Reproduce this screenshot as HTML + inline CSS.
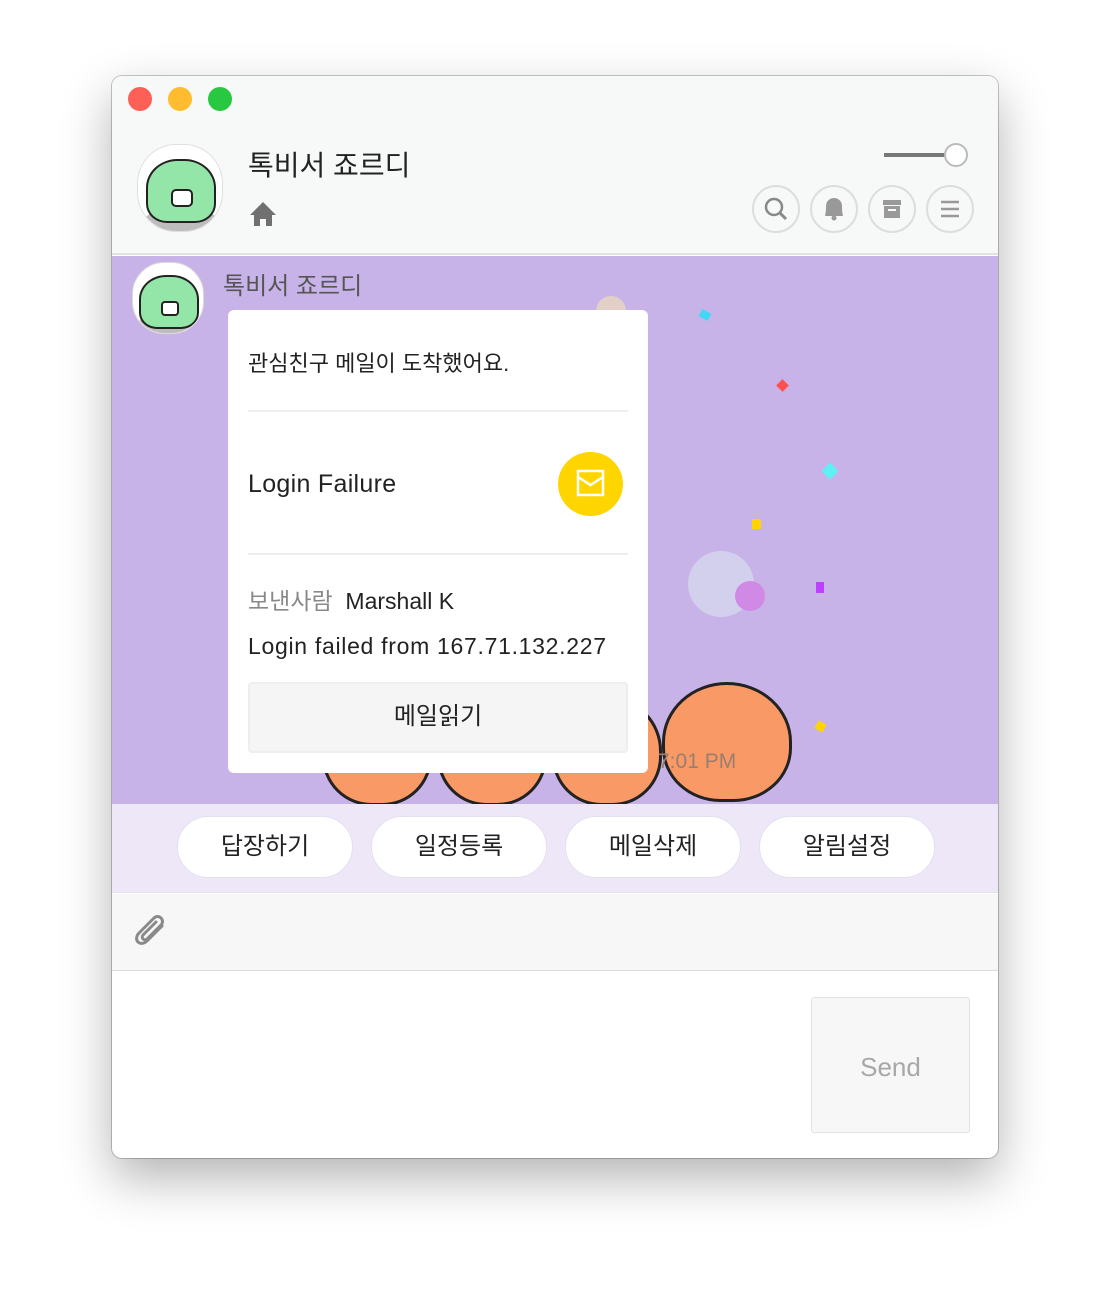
<!DOCTYPE html>
<html><head><meta charset="utf-8"><style>
*{box-sizing:border-box;margin:0;padding:0}
body{width:1110px;height:1306px;background:#fff;font-family:"Liberation Sans","Noto Sans CJK KR",sans-serif;position:relative;overflow:hidden}
.win{position:absolute;left:112px;top:76px;width:886px;height:1082px;border-radius:10px;overflow:hidden;box-shadow:0 20px 50px rgba(0,0,0,.3),0 0 0 1px #c8c8c8;background:#fff}
.abs{position:absolute}
.dot{position:absolute;top:11px;width:24px;height:24px;border-radius:50%}
.cb{position:absolute;top:109px;width:48px;height:48px;border-radius:50%;border:2px solid #ddd;background:#f7f8f8}
.pill{position:absolute;top:740px;width:176px;height:62px;border-radius:31px;background:#fff;border:1px solid #e4e0ec;font-size:24px;color:#222;text-align:center;line-height:60px}
.blob{position:absolute;border-radius:50% 50% 45% 45%;background:#f99a66;border:3px solid #222}
</style></head><body>
<div class="win">
 <div class="abs" style="left:0;top:0;width:886px;height:179px;background:#f7f8f8;border-bottom:2px solid #e2e2e2"></div>
 <div class="dot" style="left:16px;background:#fe5f57"></div>
 <div class="dot" style="left:56px;background:#febc2e"></div>
 <div class="dot" style="left:96px;background:#28c840"></div>
 <div class="abs" style="left:25px;top:68px;width:86px;height:88px;border-radius:45%;background:#fff;border:1px solid #e0e0e0;overflow:hidden">
  <div class="abs" style="left:6px;top:62px;width:74px;height:30px;background:#bdbdbd;border-radius:50%"></div>
  <div class="abs" style="left:8px;top:14px;width:70px;height:64px;background:#94e6a8;border:2px solid #222;border-radius:45% 45% 30% 30%"></div>
  <div class="abs" style="left:33px;top:44px;width:22px;height:18px;background:#fff;border:2px solid #222;border-radius:5px"></div>
 </div>
 <div class="abs" style="left:136px;top:68px;font-size:28px;color:#222">톡비서 죠르디</div>
 <svg class="abs" style="left:137px;top:124px" width="28" height="28" viewBox="0 0 28 28"><path d="M14 2 L27 15 L23 15 L23 26 L17 26 L17 19 L11 19 L11 26 L5 26 L5 15 L1 15 Z" fill="#707070"/></svg>
 <div class="abs" style="left:772px;top:77px;width:64px;height:4px;background:#777"></div>
 <div class="abs" style="left:832px;top:67px;width:24px;height:24px;border-radius:50%;background:#fff;border:2px solid #bbb"></div>
 <div class="cb" style="left:640px"><svg width="44" height="44" viewBox="0 0 44 44"><circle cx="20" cy="20" r="8" fill="none" stroke="#888" stroke-width="2.5"/><path d="M26 26 L32 32" stroke="#888" stroke-width="3"/></svg></div>
 <div class="cb" style="left:698px"><svg width="44" height="44" viewBox="0 0 44 44"><path d="M13 29 C14 25 14 22 14 19 C14 14 18 11 22 11 C26 11 30 14 30 19 C30 22 30 25 31 29 Z" fill="#999"/><circle cx="22" cy="31" r="2.5" fill="#999"/></svg></div>
 <div class="cb" style="left:756px"><svg width="44" height="44" viewBox="0 0 44 44"><rect x="13" y="13" width="18" height="5" fill="#999"/><rect x="14" y="19" width="16" height="12" fill="#999"/><rect x="18" y="22" width="8" height="2" fill="#f7f8f8"/></svg></div>
 <div class="cb" style="left:814px"><svg width="44" height="44" viewBox="0 0 44 44"><path d="M13 15H31M13 22H31M13 29H31" stroke="#999" stroke-width="2.5"/></svg></div>

 <div class="abs" style="left:0;top:180px;width:886px;height:548px;background:#c8b3e8;overflow:hidden">
  <div class="abs" style="left:20px;top:6px;width:72px;height:72px;border-radius:45%;background:#fff;border:1px solid #ddd;overflow:hidden">
   <div class="abs" style="left:4px;top:50px;width:64px;height:26px;background:#bdbdbd;border-radius:50%"></div>
   <div class="abs" style="left:6px;top:12px;width:60px;height:54px;background:#94e6a8;border:2px solid #222;border-radius:45% 45% 30% 30%"></div>
   <div class="abs" style="left:28px;top:38px;width:18px;height:15px;background:#fff;border:2px solid #222;border-radius:4px"></div>
  </div>
  <div class="abs" style="left:111px;top:10px;font-size:24px;color:#555">톡비서 죠르디</div>
  <div class="abs" style="left:484px;top:40px;width:30px;height:30px;border-radius:50%;background:#e2d0c8"></div>
  <div class="abs" style="left:576px;top:295px;width:66px;height:66px;border-radius:50%;background:#d2d0ec"></div>
  <div class="abs" style="left:623px;top:325px;width:30px;height:30px;border-radius:50%;background:#d08ae6"></div>
  <div class="abs" style="left:588px;top:55px;width:10px;height:8px;background:#3fd8f5;transform:rotate(30deg)"></div>
  <div class="abs" style="left:666px;top:125px;width:9px;height:9px;background:#ff5050;transform:rotate(45deg)"></div>
  <div class="abs" style="left:712px;top:209px;width:12px;height:12px;background:#5ef0f5;transform:rotate(45deg)"></div>
  <div class="abs" style="left:640px;top:263px;width:9px;height:10px;background:#ffd400"></div>
  <div class="abs" style="left:704px;top:326px;width:8px;height:11px;background:#c040ff"></div>
  <div class="abs" style="left:704px;top:466px;width:9px;height:9px;background:#ffd400;transform:rotate(30deg)"></div>
  <div class="blob" style="left:210px;top:440px;width:110px;height:110px"></div>
  <div class="blob" style="left:325px;top:440px;width:110px;height:110px"></div>
  <div class="blob" style="left:440px;top:440px;width:110px;height:110px"></div>
  <div class="blob" style="left:550px;top:426px;width:130px;height:120px"></div>
  <div class="abs" style="left:546px;top:494px;font-size:21px;color:#9a7d6e">7:01 PM</div>
 </div>
 <div class="abs" style="left:116px;top:234px;width:420px;height:463px;background:#fff;border-radius:6px">
  <div class="abs" style="left:20px;top:36px;font-size:22px;color:#222">관심친구 메일이 도착했어요.</div>
  <div class="abs" style="left:20px;top:100px;width:380px;height:2px;background:#eee"></div>
  <div class="abs" style="left:20px;top:160px;font-size:25px;color:#222;letter-spacing:0.3px">Login Failure</div>
  <div class="abs" style="left:330px;top:142px;width:65px;height:64px;border-radius:50%;background:#ffd500"><svg width="65" height="64" viewBox="0 0 65 64"><rect x="20" y="19" width="25" height="24" fill="none" stroke="#fff" stroke-width="2.5"/><path d="M20 25 L32.5 33 L45 25" fill="none" stroke="#fff" stroke-width="2.5"/></svg></div>
  <div class="abs" style="left:20px;top:243px;width:380px;height:2px;background:#eee"></div>
  <div class="abs" style="left:20px;top:272px;font-size:23px;color:#222"><span style="color:#888">보낸사람</span>&nbsp; Marshall K</div>
  <div class="abs" style="left:20px;top:323px;font-size:23px;color:#222;letter-spacing:0.7px">Login failed from 167.71.132.227</div>
  <div class="abs" style="left:20px;top:372px;width:380px;height:71px;background:#f5f5f5;border:2px solid #eee;border-radius:4px;text-align:center;line-height:66px;font-size:24px;color:#222">메일읽기</div>
 </div>
 <div class="abs" style="left:0;top:728px;width:886px;height:89px;background:#ede7f8;border-bottom:1px solid #e3e3e3"></div>
 <div class="pill" style="left:65px">답장하기</div>
 <div class="pill" style="left:259px">일정등록</div>
 <div class="pill" style="left:453px">메일삭제</div>
 <div class="pill" style="left:647px">알림설정</div>
 <div class="abs" style="left:0;top:818px;width:886px;height:77px;background:#f7f7f7;border-bottom:1px solid #ddd"></div>
 <svg class="abs" style="left:20px;top:836px" width="42" height="42" viewBox="0 0 42 42"><path d="M30 14 L15 29 C12 32 8 32 6 30 C4 28 4 24 7 21 L22 6 C24 4 27 4 29 6 C31 8 31 11 29 13 L15 27 C14 28 12 28 11 27 C10 26 10 24 11 23 L24 10" fill="none" stroke="#8a8a8a" stroke-width="3" stroke-linecap="round"/></svg>
 <div class="abs" style="left:699px;top:921px;width:159px;height:136px;background:#f7f7f7;border:1px solid #e2e2e2;border-radius:3px;text-align:center;line-height:138px;font-size:26px;color:#a8a8a8">Send</div>
</div>
</body></html>
